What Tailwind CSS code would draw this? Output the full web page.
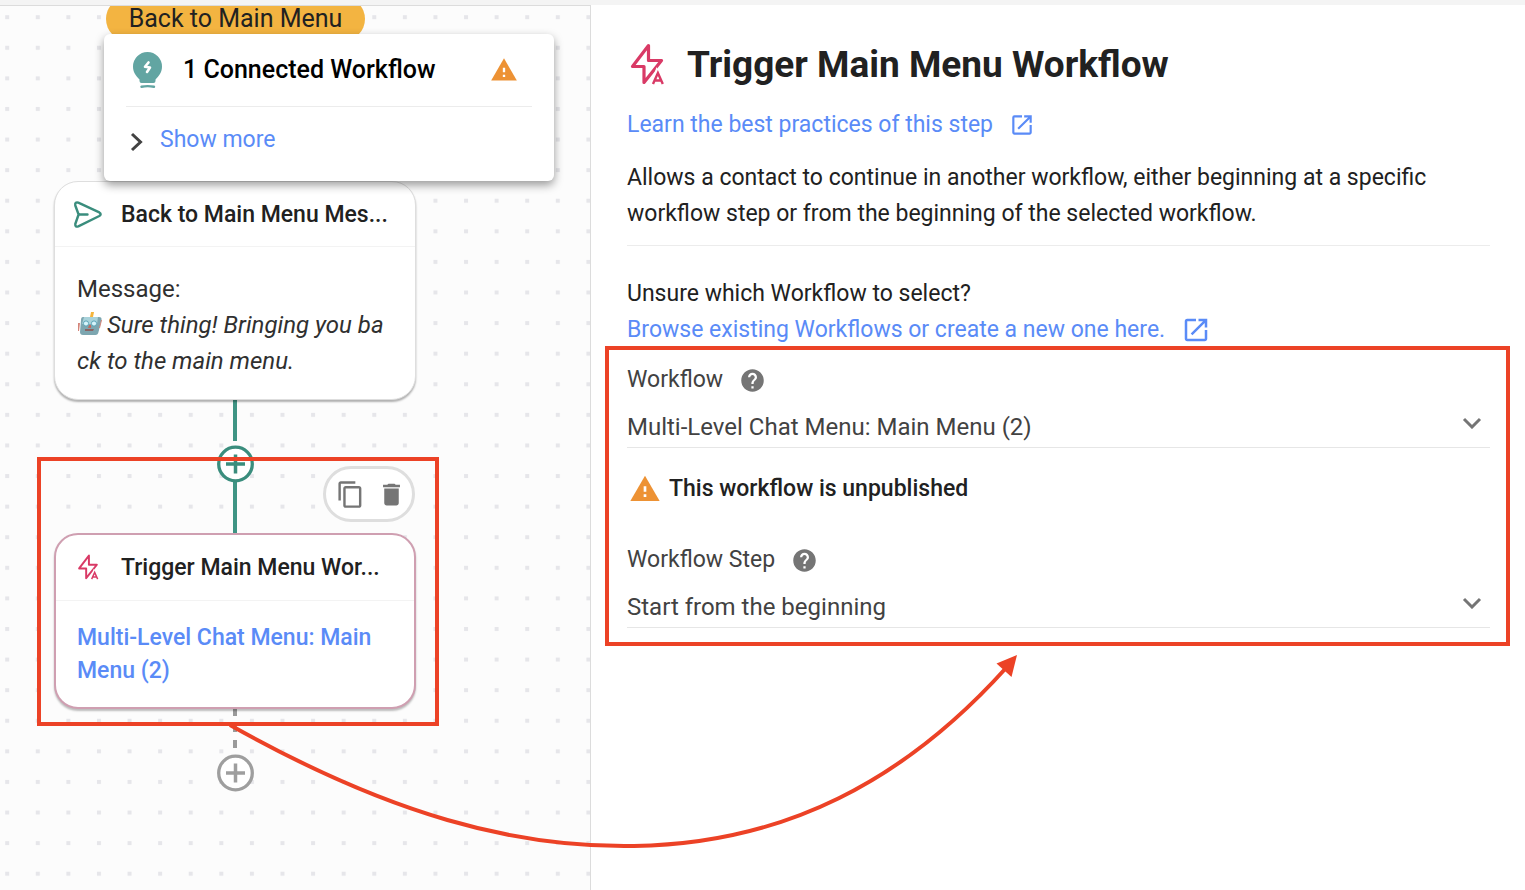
<!DOCTYPE html>
<html lang="en">
<head>
<meta charset="utf-8">
<title>Trigger Main Menu Workflow</title>
<script src="https://cdn.jsdelivr.net/npm/@tailwindcss/browser@4"></script>
</head>
<body class="bg-white font-[Roboto,sans-serif] text-[23px] leading-9 text-[#212121]">
<svg class="hidden" aria-hidden="true">
  <symbol id="warn" viewBox="0 0 24 24"><path fill="#ed9234" d="M1 21h22L12 2 1 21z"/><path fill="#fff" d="M13 18h-2v-2h2v2zm0-4h-2v-4h2v4z"/></symbol>
  <symbol id="open" viewBox="0 0 24 24"><path fill="currentColor" d="M19 19H5V5h7V3H5a2 2 0 0 0-2 2v14c0 1.100.89 2 2 2h14c1.100 0 2-.9 2-2v-7h-2v7zM14 3v2h3.590l-9.830 9.830 1.410 1.410L19 6.410V10h2V3h-7z"/></symbol>
  <symbol id="help" viewBox="0 0 24 24"><path fill="currentColor" d="M12 2C6.480 2 2 6.480 2 12s4.480 10 10 10 10-4.480 10-10S17.520 2 12 2zm1 17h-2v-2h2v2zm2.070-7.750l-.9.92C13.450 12.900 13 13.500 13 15h-2v-.5c0-1.100.45-2.100 1.170-2.830l1.240-1.260c.37-.36.59-.86.59-1.410 0-1.100-.9-2-2-2s-2 .9-2 2H8c0-2.210 1.790-4 4-4s4 1.790 4 4c0 .88-.36 1.680-.93 2.250z"/></symbol>
  <symbol id="bolt" viewBox="0 0 36 44"><path fill="none" stroke="#d93a66" stroke-width="3.200" stroke-linejoin="round" d="M19.500 2.500 L3.500 23.500 H15 V39.500 L32.500 17.500 H19.500 Z"/><path fill="#fff" d="M27.500 24 L36 43 H21 Z"/><path fill="none" stroke="#d93a66" stroke-width="2.400" d="M24 41 L28.900 30 L33.800 41 M25.500 37.500 H32.500"/></symbol>
  <symbol id="plus" viewBox="0 0 38 38"><circle cx="19.500" cy="19" r="16.800" fill="#fff" stroke="currentColor" stroke-width="3.300"/><path stroke="currentColor" stroke-width="3.500" d="M10 19h19M19.500 9.500v19"/></symbol>
</svg>

<div class="relative flex min-h-screen flex-col overflow-hidden">
  <div class="h-[5px] bg-[#f4f4f4]"></div>
  <div class="flex flex-1">

    <!-- Workflow canvas -->
    <main class="relative w-[591px] shrink-0 overflow-hidden border-t border-r border-[#dcdcdc] bg-[#fcfcfc]">
      <svg class="absolute inset-0 size-full" aria-hidden="true">
        <defs><pattern id="dots" x="5.200" y="9.200" width="30.590" height="30.590" patternUnits="userSpaceOnUse"><rect width="4" height="4" fill="#e6e6ea"/></pattern></defs>
        <rect width="100%" height="100%" fill="url(#dots)"/>
      </svg>
      <svg class="absolute top-0 left-[215px] h-[800px] w-10" viewBox="0 0 40 800" aria-hidden="true">
        <path stroke="#f3b441" stroke-width="4" d="M20 30v150"/>
        <path stroke="#3f9484" stroke-width="4" d="M20 390v45M20 474v56"/>
        <path stroke="#9a9a9a" stroke-width="4" stroke-dasharray="8 8" d="M20 702v44"/>
      </svg>
      <div class="absolute -top-[9px] left-[106px] flex h-11 w-[259px] items-center justify-center rounded-full bg-[#f3b441] text-[25px]">Back to Main Menu</div>

      <button type="button" aria-label="Add step" class="absolute top-[439px] left-[216px] text-[#3a8d7d]"><svg class="size-[38px]"><use href="#plus"/></svg></button>
      <button type="button" aria-label="Add final step" class="absolute top-[748px] left-[216px] text-[#9e9e9e]"><svg class="size-[38px]"><use href="#plus"/></svg></button>

      <article class="absolute top-[175px] left-[54px] w-[362px] rounded-3xl border border-[#dedede] bg-white pb-5 shadow-[0_2px_2px_rgba(0,0,0,0.3)]">
        <h2 class="flex h-[65px] items-center gap-[18px] border-b border-[#f3f3f3] px-[18px] pt-[2px] font-medium">
          <svg class="size-[30px] shrink-0" viewBox="0 0 30 30" fill="none" stroke="#3a8d7d" stroke-width="2.400" stroke-linejoin="round" stroke-linecap="round"><path d="M5.300 2.600 L26.300 12.400 Q29 14.200 26.300 16 L5.300 26.400 Q2 27.400 2.300 24 L5.600 14.500 L2.300 5.500 Q1.600 1.800 5.300 2.600 Z M6.500 14.500 H14.500"/></svg>
          <span class="whitespace-nowrap">Back to Main Menu Mes...</span>
        </h2>
        <div class="px-[22px] pt-6 text-[24px] text-[#303030]">
          <p>Message:</p>
          <p class="break-all italic"><svg class="mr-1 inline-block size-[26px] align-[-4px]" viewBox="0 0 26 26" aria-label="robot" role="img"><path fill="#f5b53c" d="M14 1h3l-1 5h-3z"/><path fill="#7da6b0" d="M6 6h16q3 0 2.500 3l-3 12q-.5 3-3 3H6q-3 0-3-3l1-12q0-3 2-3z"/><path fill="#a8d2da" d="M7 6h14l-1 7H5z"/><path fill="#d4857a" d="M1 12h2l-1 8H1zM24 9h1l-2 8h-1z"/><circle cx="9" cy="12.500" r="2.600" fill="#d6f4fa" stroke="#5ea5b8"/><circle cx="17" cy="12.500" r="2.600" fill="#d6f4fa" stroke="#5ea5b8"/><path fill="#c46a5e" d="M12 14h2v3h-3z"/><path fill="#8a6464" d="M8 18h9l-1 2H8z"/></svg>Sure thing! Bringing you back to the main menu.</p>
        </div>
      </article>

      <div class="absolute top-[460px] left-[323px] flex h-14 w-[92px] items-center justify-center gap-3 rounded-full border-3 border-[#dedede] bg-white pl-[3px] text-[#757575]">
        <button type="button" aria-label="Duplicate"><svg class="size-[29px]" viewBox="0 0 24 24" fill="currentColor"><path d="M16 1H4c-1.100 0-2 .9-2 2v14h2V3h12V1zm3 4H8c-1.100 0-2 .9-2 2v14c0 1.100.9 2 2 2h11c1.100 0 2-.9 2-2V7c0-1.100-.9-2-2-2zm0 16H8V7h11v14z"/></svg></button>
        <button type="button" aria-label="Delete"><svg class="size-[29px]" viewBox="0 0 24 24" fill="currentColor"><path d="M6 19c0 1.100.9 2 2 2h8c1.100 0 2-.9 2-2V7H6v12zM19 4h-3.500l-1-1h-5l-1 1H5v2h14V4z"/></svg></button>
      </div>

      <article class="absolute top-[527px] left-[54px] w-[362px] rounded-3xl border-2 border-[#cf9fb1] bg-white pb-5 shadow-[0_2px_2px_rgba(0,0,0,0.25)]">
        <h2 class="flex h-[66px] items-center gap-[22px] border-b border-[#f3f3f3] pr-[18px] pl-[21px] font-medium">
          <svg class="h-[27px] w-[22px] shrink-0"><use href="#bolt"/></svg>
          <span class="whitespace-nowrap">Trigger Main Menu Wor...</span>
        </h2>
        <p class="px-[21px] pt-5 leading-[33px] font-medium text-[#5a8bf7]"><a href="#">Multi-Level Chat Menu: Main Menu (2)</a></p>
      </article>

      <!-- Connected workflows popover -->
      <section class="absolute top-7 left-[104px] h-[147px] w-[450px] rounded-md bg-white px-[22px] shadow-[0_4px_10px_rgba(0,0,0,0.4)]">
        <h2 class="flex h-[73px] items-center border-b border-[#ececec] pr-[14px] pl-[6px] text-[25px] font-medium text-black">
          <svg class="h-[38px] w-[31px] shrink-0" viewBox="0 0 31 38"><path fill="#62a5a2" d="M15.500 1A14.500 14.500 0 0 1 30 15.500C30 21 27.500 24.500 23.500 28.500V30q0 2-2 2h-12q-2 0-2-2v-1.500C3.500 24.500 1 21 1 15.500A14.500 14.500 0 0 1 15.500 1Z"/><path stroke="#62a5a2" stroke-width="2.400" stroke-linecap="round" fill="none" d="M9.500 35.700q6-1.200 12.500 0"/><path fill="none" stroke="#fff" stroke-width="2.600" stroke-linejoin="round" stroke-linecap="round" d="M16.500 11.500l-3.500 4.300 5 .7-3 4.500"/></svg>
          <span class="ml-5 flex-1">1 Connected Workflow</span>
          <svg class="size-7 shrink-0" role="img" aria-label="Warning"><use href="#warn"/></svg>
        </h2>
        <button type="button" class="flex h-[66px] items-center gap-4 pl-1 text-[#5a8bf7]">
          <svg class="mt-1 h-5 w-[14px]" viewBox="0 0 14 20" fill="none" stroke="#424242" stroke-width="3"><path d="M2 2l8.500 8L2 18"/></svg>
          Show more
        </button>
      </section>
    </main>

    <!-- Step settings -->
    <aside class="min-w-0 flex-1 pt-[38px] pr-[35px] pl-9">
      <h1 class="flex items-center gap-[22px] text-[37px] leading-[44px] font-bold">
        <svg class="ml-[2px] h-11 w-9 shrink-0"><use href="#bolt"/></svg>
        Trigger Main Menu Workflow
      </h1>
      <p class="mt-5"><a href="#" class="flex h-9 items-center gap-4 text-[#5a8bf7]">Learn the best practices of this step <svg class="size-[26px]"><use href="#open"/></svg></a></p>
      <p class="mt-[17px]">Allows a contact to continue in another workflow, either beginning at a specific workflow step or from the beginning of the selected workflow.</p>
      <hr class="mt-[13px] border-[#ececec]">
      <p class="mt-[30px]">Unsure which Workflow to select?</p>
      <p><a href="#" class="flex h-9 items-center gap-4 text-[#5a8bf7]">Browse existing Workflows or create a new one here. <svg class="size-[30px]"><use href="#open"/></svg></a></p>

      <form class="-mt-[2px] -mr-5 -ml-[22px] border-4 border-[#ec4226] pt-3 pr-4 pb-[14px] pl-[18px] text-[#424242]">
        <div class="flex items-center gap-4"><label for="workflow">Workflow</label><svg class="size-[27px] text-[#757575]"><use href="#help"/></svg></div>
        <div class="relative mt-2">
          <select id="workflow" class="block h-[42px] w-full appearance-none border-b border-[#e6e6e6] bg-transparent text-[24px]"><option>Multi-Level Chat Menu: Main Menu (2)</option></select>
          <svg class="pointer-events-none absolute top-[11px] right-2 h-3 w-5" viewBox="0 0 20 12" fill="none" stroke="#757575" stroke-width="3"><path d="M2 2l8 8 8-8"/></svg>
        </div>
        <p class="mt-[23px] flex items-center gap-2 pl-[2px] font-medium text-[#212121]"><svg class="size-8"><use href="#warn"/></svg>This workflow is unpublished</p>
        <div class="mt-[35px] flex items-center gap-4"><label for="step">Workflow Step</label><svg class="size-[27px] text-[#757575]"><use href="#help"/></svg></div>
        <div class="relative mt-2">
          <select id="step" class="block h-[42px] w-full appearance-none border-b border-[#e6e6e6] bg-transparent text-[24px]"><option>Start from the beginning</option></select>
          <svg class="pointer-events-none absolute top-[11px] right-2 h-3 w-5" viewBox="0 0 20 12" fill="none" stroke="#757575" stroke-width="3"><path d="M2 2l8 8 8-8"/></svg>
        </div>
      </form>
    </aside>
  </div>

  <!-- Annotations over both panes -->
  <div class="pointer-events-none absolute top-[457px] left-[37px] h-[269px] w-[402px] border-4 border-[#ec4226]"></div>
  <svg class="pointer-events-none absolute top-[640px] left-[220px] h-[220px] w-[810px]" viewBox="220 640 810 220" aria-hidden="true">
    <path fill="none" stroke="#ec4226" stroke-width="4" d="M230 725C390 815 515 848 634 846C785 844 905 780 1006 668"/>
    <path fill="#ec4226" d="M1017 655L996.500 663.500L1011.500 677Z"/>
  </svg>
</div>
</body>
</html>
